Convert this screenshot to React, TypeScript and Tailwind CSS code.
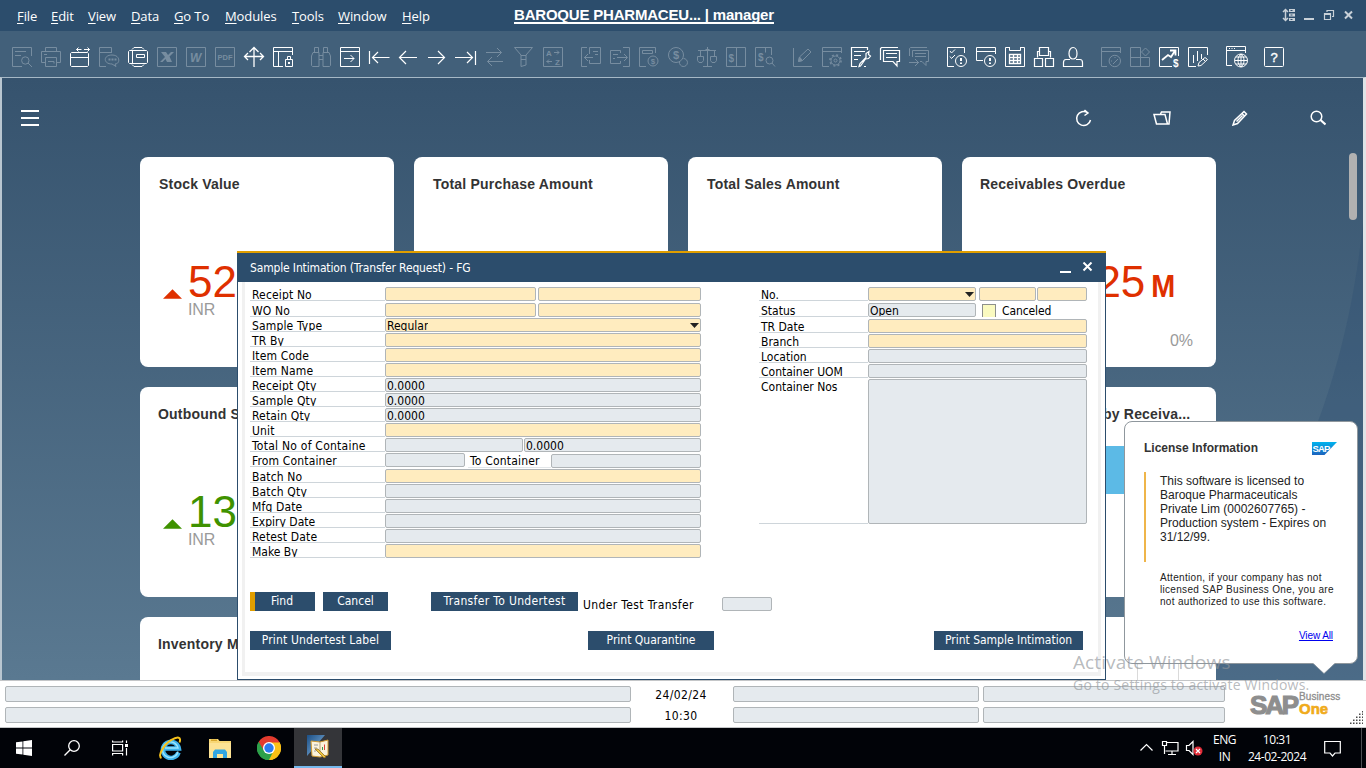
import type { ReactNode } from "react";

const SEGOE = "font-['Open_Sans','Noto_Sans',sans-serif]";
const TAHOMA = "font-['DejaVu_Sans_Condensed','DejaVu_Sans',sans-serif]";
const ARIAL = "font-['Liberation_Sans',Arial,sans-serif]";

const menus = [
  { label: "File", width: "w-[34px]" },
  { label: "Edit", width: "w-[37px]" },
  { label: "View", width: "w-[43px]" },
  { label: "Data", width: "w-[43px]" },
  { label: "Go To", width: "w-[51px]" },
  { label: "Modules", width: "w-[67px]" },
  { label: "Tools", width: "w-[46px]" },
  { label: "Window", width: "w-[64px]" },
  { label: "Help", width: "w-[40px]" },
];

function MenuBar() {
  return (
    <div className="flex h-[31px] shrink-0 bg-[#2c4d6c] text-white">
      <div className={`flex w-[497px] items-center pl-[17px] pt-[2px] text-[13px] tracking-[-0.1px] ${SEGOE}`}>
        {menus.map((m) => (
          <span key={m.label} className={`${m.width} whitespace-nowrap`}>
            <span className="underline underline-offset-2">{m.label[0]}</span>
            {m.label.slice(1)}
          </span>
        ))}
      </div>
      <div className="flex flex-1 items-start pl-[17px] pt-[7px]">
        <span className={`border-b-2 border-white text-[15px] font-bold leading-[15px] tracking-[-0.2px] ${ARIAL}`}>
          BAROQUE PHARMACEU... | manager
        </span>
      </div>
      <svg className="mr-[12px] mt-[8px] h-[14px] w-[72px]" viewBox="0 0 72 14" fill="none" stroke="#c9d1d8" strokeWidth="1.5">
        <path d="M3.500 1.500v11M1 4l2.500-2.500L6 4M1 10l2.500 2.500L6 10" />
        <path d="M7 2.500h6M7 7h6M7 11.500h6" strokeWidth="3" />
        <path d="M8.500 2.500h2M8.500 7h2M8.500 11.500h2" stroke="#2c4d6c" strokeWidth="1" />
        <path d="M22 11h10" strokeWidth="2" />
        <path d="M42.500 5.500h6v6h-6zM42 6.500h7M45 4V2.500h6.500v6H50" strokeWidth="1.200" />
        <path d="M63 3.500l7 7M70 3.500l-7 7" strokeWidth="2" />
      </svg>
    </div>
  );
}

type Glyph = { on?: boolean; draw: ReactNode };

const toolbar: Glyph[][] = [
  [
    { draw: <path d="M19.500 9V.500H.500V19.500H10M3 4.500h11M3 8.500h6M17 13.500a3.700 3.700 0 1 1-7.400 0a3.700 3.700 0 0 1 7.400 0M16 16l4 4" /> },
    { draw: <path d="M4.500 4.500V.500h11v4M4 15.500H.500V4.500h19v11H16M3 7.500h3M4.500 19.500v-9h11v9zM7 14.500h6v2" /> },
    { on: true, draw: <path d="M6.500 2.500h5M8.500.500l-2 2 2 2M14 2.500h5.500M17.500.500l2 2-2 2M1.500 5.500h16l1 1v12l-1 1h-16l-1-1v-12zM.500 10.500h18" /> },
    { draw: <><path d="M12.500 6V.500H.500V19.500H7M.500 5.500h12" /><path d="M13 8c8.500 0 8.500 9 3 9l1 2.500-4-2.500c-9 0-9-9 0-9z" /><path d="M9.500 12.500h2M12.500 12.500h2M15.500 12.500h2" strokeWidth="2" /></> },
    { on: true, draw: <path d="M4 2.500L6 .500h8l2 2M1.500 3.500h17l1 1v11l-1 1h-17l-1-1v-11zM4.500 3.500v13M8.500 7.500h8v3h-8zM4 17.500l2 2h8l2-2" /> },
    { draw: <><path d="M.500.500h19v19H.500z" /><path d="M4 5h5l2 3 3-3h3l-4.500 4.500L15 15h-5l-1.500-3-3 3H3l5-5z" className="fill-current" stroke="none" /></> },
    { draw: <><path d="M.500.500h19v19H.500z" /><text x="4" y="14.500" fontSize="12" fontWeight="700" fontStyle="italic" className="fill-current" stroke="none">W</text></> },
    { draw: <><path d="M.500.500h19v19H.500z" /><text x="2.500" y="12.500" fontSize="7.500" fontWeight="700" className="fill-current" stroke="none">PDF</text></> },
    { on: true, draw: <path d="M10 1v19M.500 9.500h19M5.500 5L10 .500 14.500 5M4 6L.500 9.500 4 13M16 6l3.500 3.500L16 13" strokeWidth="1.300" /> },
    { on: true, draw: <><path d="M19.500 8V.500H.500V19.500H10M.500 4.500h19M5.500 4.500v15M12.500 12.500h7v7h-7zM14.500 12.500v-3h3v3" /><path d="M15 15h2v2h-2z" className="fill-current" stroke="none" /></> },
  ],
  [
    { draw: <path d="M3.500 5V.500h4V5M12.500 5V.500h4V5M2 5.500h6v14H1.500l-1-1V9zM18 5.500h-6v14h6.500l1-1V9zM8 8.500h4M8 12.500h4" /> },
    { on: true, draw: <path d="M.500.500h19v19H.500zM.500 4.500h19M4 11.500h10M10.500 8l3.500 3.500-3.500 3.500" /> },
    { on: true, draw: <path d="M.500 4v13M3 10.500h17.500M9 5l-5.500 5.500L9 16" strokeWidth="1.200" /> },
    { on: true, draw: <path d="M1.500 10.500H19M8 4l-6.500 6.500L8 17" strokeWidth="1.200" /> },
    { on: true, draw: <path d="M1 10.500h16.500M11 4l6.500 6.500L11 17" strokeWidth="1.200" /> },
    { on: true, draw: <path d="M-1 10.500h17.500M11 5l5.500 5.500L11 16M19.500 4v14" strokeWidth="1.200" /> },
    { draw: <path d="M1 5.500h15.500M12 1l4.500 4.500L12 10M18 14.500H2.500M7 10l-4.500 4.500L7 19" /> },
    { draw: <path d="M.500.500h18L12 8v10l-5 1.500V8zM7 8.500h5M7 12.500h5" /> },
    { draw: <><path d="M.500.500h19v19H.500zM11 5.500h5M14 3.500l2 2-2 2M9 14.500H3.500M6 12.500l-2 2 2 2" /><text x="3" y="9" fontSize="8" fontWeight="700" className="fill-current" stroke="none">A</text><text x="12" y="17.500" fontSize="8" fontWeight="700" className="fill-current" stroke="none">Z</text></> },
  ],
  [
    { draw: <path d="M6 .500H.500v19H6M8.500 7V.500h11v16h-11V13M3 10.500h9M7 7l-3.500 3.500L7 14M12 4.500h5M14 7.500h3" /> },
    { draw: <path d="M10.500 6V3.500H.500v13h10V14M13 .500h6.500v19H13M7 10.500h10M14 7l3.500 3.500L14 14M3 7.500h5M3 11.500h2" /> },
    { draw: <><path d="M16.500 6V.500H.500V19.500H7M3.500 3.500h10v3h-10zM19 14a5 5 0 1 1-10 0a5 5 0 0 1 10 0" /><text x="11.700" y="17" fontSize="8" fontWeight="700" className="fill-current" stroke="none">$</text></> },
    { draw: <><circle cx="8" cy="8" r="7.500" /><path d="M15.500 11.500a4 4 0 1 1-4 3.500" /><text x="5" y="12" fontSize="11" fontWeight="700" className="fill-current" stroke="none">$</text></> },
    { draw: <path d="M10.500 2v17M6 19.500h9M1 3.500h18M10.500 0v3M3.500 4v5M17.500 4v5M.500 9.500h6v4l-1.500 2h-3l-1.500-2zM13.500 9.500h6v4l-1.500 2h-3l-1.500-2zM8.500 2.500h4" /> },
    { draw: <><path d="M.500.500h19v19H.500zM10.500.500v19" /><text x="2.500" y="14.500" fontSize="10" fontWeight="700" className="fill-current" stroke="none">$</text></> },
    { draw: <><path d="M9 19.500H.500V.500h16V8M10.500.500v5M18 13.500a3.500 3.500 0 1 1-7 0a3.500 3.500 0 0 1 7 0M17 16l3 3.500" /><text x="3" y="14" fontSize="10" fontWeight="700" className="fill-current" stroke="none">$</text></> },
  ],
  [
    { draw: <><path d="M.500 1v18.500H19M5.500 14.500l1-4.500 8.500-8 3 3-8.500 8.500z" /><path d="M5.500 14.500l1-4.500 3 3.500z" className="fill-current" /></> },
    { draw: <><path d="M19.500 6V.500H.500V19.500H7M.500 4.500h19" /><circle cx="13.500" cy="13.500" r="4.500" /><circle cx="13.500" cy="13.500" r="1.500" /><circle cx="13.500" cy="13.500" r="5.600" strokeDasharray="2 2.400" strokeWidth="1.500" /></> },
    { on: true, draw: <path d="M16.500 3V.500H.500V19.500H6M3 4.500h11M3 8.500h7M3 12.500h4M8 19.500l1-3 6-6V6.500l3-2-.500 3 2 1.500-2 2.500-3 .500-5 7zM13 19.500h2" strokeWidth="1.200" /> },
    { on: true, draw: <path d="M.500 13V1.500l1-1H18M3.500 3.500h16v11H17v4.500l-4-4.500H3.500zM6 6.500h11M6 10.500h11" strokeWidth="1.200" /> },
    { draw: <path d="M.500 9V1.500l1-1H18M3.500 10V3.500h16v11H17v4l-4-4h-2M6 6.500h11M6 9.500h11M0 15.500h10M6 12l3.500 3.500L6 19" /> },
  ],
  [
    { on: true, draw: <><path d="M17.500 6V.500H.500V19.500H7M3 4l1.500 2L8 2.500M3 9.500l1.500 2L8 8" /><circle cx="14" cy="14" r="5.500" /><path d="M14 11v3M14 15.500v1.500" strokeWidth="2" /></> },
    { on: true, draw: <><path d="M19.500 7V.500H.500V13.500H7M.500 4.500h19" /><circle cx="14" cy="14" r="5.500" /><path d="M14 11v3M14 15.500v1.500" strokeWidth="2" /></> },
    { on: true, draw: <><path d="M4 .500H.500v19h19V.500H16M4.500 0v3.500h11V0" /><path d="M4.500 7.500h11v9h-11zM4.500 10.500h11M4.500 13.500h11M8.500 7v9M12.500 7v9" strokeWidth="1.300" /></> },
    { on: true, draw: <path d="M5.500.500h9v8h-9zM.500 11.500h8v8h-8zM11.500 11.500h8v8h-8zM5 4.500H3.500v6M15 4.500h1.500v6" strokeWidth="1.200" /> },
    { on: true, draw: <path d="M14 6.500c0 3-1.500 5.500-4 5.500s-4-2.500-4-5.500S7.500.500 10 .500s4 3 4 6zM7 12.500H3c-2 0-2.500 2-2.500 3v4h19v-4c0-1-.500-3-2.500-3h-4" strokeWidth="1.200" /> },
  ],
  [
    { draw: <path d="M19.500 6V.500H.500V19.500H6M.500 4.500h19M19.500 14a5.700 5.700 0 1 1-11.400 0a5.700 5.700 0 0 1 11.400 0M12 17l5-5M10 14h1M14 10v1" /> },
    { draw: <path d="M.500.500h10v19H.500zM.500 10.500h19v9H10M19.500 5l-4 4-4-4 4-4z" /> },
    { on: true, draw: <><path d="M19.500 9V.500H.500V19.500H13" /><path d="M3 13l6-5 3 2 3.500-5.500M11 3.500h5.500v5" strokeWidth="1.800" /><text x="14" y="19.500" fontSize="10" fontWeight="700" className="fill-current" stroke="none">$</text></> },
    { on: true, draw: <path d="M19.500 8V.500H.500V19.500H8M5.500 8v8M9.500 4v10M13.500 7v5M10 19l1-3.500 6-5 2.500 2-6.500 6zM15 12l2 2" /> },
  ],
  [
    { on: true, draw: <><path d="M19.500 6V-.500H.500V18.500H6M.500 3.500h19M3 1.500h1M5.500 1.500h1M8 1.500h1" /><circle cx="15" cy="13.500" r="6.500" /><path d="M8.500 13.500h13M15 7v13M10 10h10M10 17h10M15 7c-4 3-4 10 0 13M15 7c4 3 4 10 0 13" /></> },
  ],
  [
    { on: true, draw: <><rect x=".5" y=".5" width="19" height="19" rx="1" /><text x="6.500" y="14.500" fontSize="13" className="fill-current" strokeWidth=".4">?</text></> },
  ],
];

function Toolbar() {
  return (
    <div className={`flex h-[46px] shrink-0 gap-[18px] bg-[#42607a] pl-[12px] pt-[16px] ${ARIAL}`}>
      {toolbar.map((group, g) => (
        <div key={g} className="flex gap-[9px]">
          {group.map((icon, i) => (
            <svg
              key={i}
              viewBox="0 0 20 20"
              className={`h-5 w-5 overflow-visible ${icon.on ? "text-white" : "text-[#778da0]"}`}
              fill="none"
              stroke="currentColor"
              strokeWidth="1"
            >
              {icon.draw}
            </svg>
          ))}
        </div>
      ))}
    </div>
  );
}

function Tile({ title, pad = "pl-[19px]", children }: { title: string; pad?: string; children?: ReactNode }) {
  return (
    <div className={`h-[210px] rounded-[8px] bg-white pt-[19px] ${pad}`}>
      <div className="text-[14px] font-bold leading-4 tracking-[0.2px] text-[#333]">{title}</div>
      {children}
    </div>
  );
}

function Kpi({ value, tone, fill }: { value: string; tone: string; fill: string }) {
  return (
    <div className={`ml-[4px] mt-[69px] ${tone}`}>
      <div className="flex h-[42px] items-center">
        <svg viewBox="0 0 20 10" className="mt-[24px] h-[10px] w-[19px]">
          <path d="M0 10L10 0l10 10z" className={fill} />
        </svg>
        <span className="ml-[6px] text-[44px] leading-[42px]">{value}</span>
      </div>
      <div className="ml-[25px] mt-[-2px] text-[16px] leading-[18px] tracking-[-0.1px] text-[#9a9a9a]">INR</div>
    </div>
  );
}

function Cockpit() {
  return (
    <div className={`relative h-full overflow-hidden bg-linear-to-b from-[#36536e] to-[#5a7991] ${ARIAL}`}>
      <svg className="absolute right-0 top-0 h-full w-[200px]" viewBox="0 0 200 602" preserveAspectRatio="none">
        <path d="M200 145C190 240 167 330 122 420C80 500 60 540 30 602H200z" fill="#2c4c70" fillOpacity=".3" />
      </svg>
      <div className="relative flex h-[79px] items-start justify-between pl-[19px] pr-[37px] pt-[32px]">
        <svg viewBox="0 0 18 16" className="h-4 w-[18px]" stroke="#fff" strokeWidth="2">
          <path d="M0 1h18M0 8h18M0 15h18" />
        </svg>
        <div className="flex gap-[62px]">
          <svg viewBox="0 0 16 16" className="ml-[1px] h-4 w-4 overflow-visible" fill="none" stroke="#fff" strokeWidth="1.500">
            <path d="M12.500 2.700A7 7 0 1 0 15.500 10M9.500 0l3.500 3-3.500 2.500" />
          </svg>
          <svg viewBox="0 0 17 16" className="h-4 w-[17px] overflow-visible" fill="none" stroke="#fff" strokeWidth="1.500">
            <path d="M1 4.500l2.500 9.500h11L12 4.500zM7.500 4l1-2h8.500L16 14h-1.500" />
          </svg>
          <svg viewBox="0 0 16 16" className="h-4 w-4" fill="none" stroke="#fff" strokeWidth="1.500">
            <path d="M1 15l1.500-4.500L12 1.500 14.500 4l-9 9.500zM10 3.500l2.500 2.500M4.500 11.500l6-6" />
          </svg>
          <svg viewBox="0 0 16 16" className="h-4 w-4" fill="none" stroke="#fff" strokeWidth="1.500">
            <circle cx="6.500" cy="6.500" r="5.300" />
            <path d="M10.500 10l5 4.500" strokeWidth="2.200" />
          </svg>
        </div>
      </div>
      <div className="relative ml-[138px] grid w-[1076px] grid-cols-[254px_254px_254px_254px] gap-[20px]">
        <Tile title="Stock Value"><Kpi value="52" tone="text-[#df3000]" fill="fill-[#df3000]" /></Tile>
        <Tile title="Total Purchase Amount" />
        <Tile title="Total Sales Amount" />
        <Tile title="Receivables Overdue" pad="pl-[18px]">
          <div className="mr-[39px] mt-[66px] flex items-baseline justify-end text-[#df3000]">
            <span className="text-[44px] leading-[48px]">25</span>
            <span className="ml-[5px] origin-bottom scale-x-90 text-[32px] font-bold leading-[40px]">M</span>
          </div>
          <div className="mr-[23px] mt-[25px] text-right text-[16px] leading-[20px] text-[#9a9a9a]">0%</div>
        </Tile>
        <Tile title="Outbound S" pad="pl-[18px]"><Kpi value="13" tone="pl-[1px] text-[#3f9200]" fill="fill-[#3f9200]" /></Tile>
        <Tile title="" />
        <Tile title="" />
        <Tile title="by Receiva..." pad="pl-[141px]">
          <div className="mt-[24px] h-[48px] w-[60px] bg-[#5cbae6]" />
        </Tile>
        <Tile title="Inventory M" pad="pl-[18px]" />
        <Tile title="" />
        <Tile title="" />
        <Tile title="" pad="pl-[175px]">
          <div className="mt-[11px] h-[40px] w-[42px] border-x border-[#dadada]" />
        </Tile>
      </div>
      <div className="absolute right-[6px] top-[75px] h-[67px] w-[8px] rounded-full bg-[#b1b1b1]" />
    </div>
  );
}

function Box({ w, value, tone = "y", arrow }: { w: string; value?: string; tone?: "y" | "g"; arrow?: boolean }) {
  return (
    <div
      className={`flex h-[14px] shrink-0 items-start justify-between rounded-[2px] border border-[#b0b5b8] pl-[1px] ${w} ${tone === "y" ? "bg-[#ffecbf]" : "bg-[#e5eaee]"}`}
    >
      <span className="h-[12px] overflow-hidden leading-[15px]">{value}</span>
      {arrow && (
        <svg viewBox="0 0 9 5" className="mr-[1px] mt-[4px] h-[5px] w-[9px]">
          <path d="M0 0h9L4.500 5z" fill="#222" />
        </svg>
      )}
    </div>
  );
}

function Row({ label, lw, gap = "mt-[1px]", children }: { label: string; lw: string; gap?: string; children: ReactNode }) {
  return (
    <div className={`flex h-[14px] ${gap}`}>
      <div className={`h-[14px] shrink-0 overflow-hidden whitespace-nowrap border-b border-[#ced5da] pl-[2px] leading-[17px] ${lw}`}>
        {label}
      </div>
      {children}
    </div>
  );
}

function Button({ label, w, first }: { label: string; w: string; first?: boolean }) {
  return (
    <div
      className={`h-[19px] bg-[#2c4d6c] text-center leading-[18px] text-white ${w} ${first ? "border-l-[5px] border-[#e09e00] pr-[6px]" : ""}`}
    >
      {label}
    </div>
  );
}

function FormWindow() {
  const L = "w-[135px] tracking-[0.15px]";
  const R = "w-[109px]";
  const full = "w-[316px]";
  return (
    <div className={`absolute left-[235px] top-[173px] flex h-[429px] w-[869px] flex-col border-x border-b border-[#2c4d6c] bg-white text-[12px] text-black ${TAHOMA}`}>
      <div className="mx-[-1px] flex h-[31px] shrink-0 items-center justify-between border-t-2 border-[#e09e00] bg-[#2c4d6c] pl-[13px] pr-[13px] text-[12px] tracking-[-0.15px] text-white">
        <span className="pt-[1px]">Sample Intimation (Transfer Request) - FG</span>
        <svg viewBox="0 0 33 12" className="h-[12px] w-[33px]" stroke="#fff" strokeWidth="2">
          <path d="M0 10h11M23.500 .500l8 8M31.500 .500l-8 8" />
        </svg>
      </div>
      <div className="mb-[3px] ml-[4px] mr-[4px] flex-1 border-x-[3px] border-b-4 border-[#f1f1f1] pl-[5px]">
        <div className="flex h-[310px] items-start pt-[5px]">
          <div className="w-[451px]">
            <Row label="Receipt No" lw={L} gap="mt-0"><Box w="w-[151px] mr-[2px]" /><Box w="w-[163px]" /></Row>
            <Row label="WO No" lw={L} gap="mt-[2px]"><Box w="w-[151px] mr-[2px]" /><Box w="w-[163px]" /></Row>
            <Row label="Sample Type" lw={L}><Box w={full} value="Regular" arrow /></Row>
            <Row label="TR By" lw={L}><Box w={full} /></Row>
            <Row label="Item Code" lw={L}><Box w={full} /></Row>
            <Row label="Item Name" lw={L}><Box w={full} /></Row>
            <Row label="Receipt Qty" lw={L}><Box w={full} tone="g" value="0.0000" /></Row>
            <Row label="Sample Qty" lw={L}><Box w={full} tone="g" value="0.0000" /></Row>
            <Row label="Retain Qty" lw={L}><Box w={full} tone="g" value="0.0000" /></Row>
            <Row label="Unit" lw={L}><Box w={full} /></Row>
            <Row label="Total No of Containe" lw="w-[135px] tracking-[0.25px]"><Box w="w-[138px] mr-[1px]" tone="g" /><Box w="w-[177px]" tone="g" value="0.0000" /></Row>
            <Row label="From Container" lw={L}>
              <Box w="w-[80px] mr-[3px]" tone="g" />
              <div className="h-[15px] w-[83px] border-b border-[#e2e6e9] pl-[2px] leading-[17px] tracking-[0.2px]">To Container</div>
              <Box w="w-[150px] mt-[1px]" tone="g" />
            </Row>
            <Row label="Batch No" lw={L} gap="mt-[2px]"><Box w={full} /></Row>
            <Row label="Batch Qty" lw={L}><Box w={full} tone="g" /></Row>
            <Row label="Mfg Date" lw={L}><Box w={full} tone="g" /></Row>
            <Row label="Expiry Date" lw="w-[135px]"><Box w={full} tone="g" /></Row>
            <Row label="Retest Date" lw={L}><Box w={full} tone="g" /></Row>
            <Row label="Make By" lw="w-[135px]"><Box w={full} /></Row>
          </div>
          <div className="ml-[58px] w-[328px]">
            <Row label="No." lw={R} gap="mt-0"><Box w="w-[108px] mr-[3px]" arrow /><Box w="w-[57px] mr-[1px]" /><Box w="w-[50px]" /></Row>
            <Row label="Status" lw={R} gap="mt-[2px]">
              <Box w="w-[108px]" tone="g" value="Open" />
              <div className="ml-[6px] mt-[1px] h-[13px] w-[14px] border border-b-0 border-[#8d908c] bg-[#fafac0]" />
              <span className="ml-[6px] leading-[17px] tracking-[-0.1px]">Canceled</span>
            </Row>
            <Row label="TR Date" lw={R} gap="mt-[2px]"><Box w="w-[219px]" /></Row>
            <Row label="Branch" lw={R}><Box w="w-[219px]" /></Row>
            <Row label="Location" lw={R}><Box w="w-[219px]" tone="g" /></Row>
            <Row label="Container UOM" lw={R}><Box w="w-[219px]" tone="g" /></Row>
            <div className="mt-[1px] flex h-[145px]">
              <div className="w-[109px] border-b border-[#ced5da] pl-[2px] leading-[17px]">Container Nos</div>
              <div className="w-[219px] rounded-[2px] border border-[#b0b5b8] bg-[#e5eaee]" />
            </div>
          </div>
        </div>
        <div className="flex">
          <Button label="Find" w="w-[65px]" first />
          <Button label="Cancel" w="ml-[8px] w-[65px]" />
          <Button label="Transfer To Undertest" w="ml-[43px] w-[147px] tracking-[0.35px]" />
          <span className="ml-[5px] w-[139px] pt-[5px] leading-[17px] tracking-[0.37px]">Under Test Transfer</span>
          <Box w="w-[50px] mt-[5px]" tone="g" />
        </div>
        <div className="mt-[17px] flex">
          <Button label="Print Undertest Label" w="w-[141px] tracking-[0.15px]" />
          <Button label="Print Quarantine" w="ml-[197px] w-[126px]" />
          <Button label="Print Sample Intimation" w="ml-[220px] w-[149px]" />
        </div>
      </div>
    </div>
  );
}

function LicensePopup() {
  return (
    <div className={`absolute left-[1122px] top-[343px] h-[243px] w-[234px] rounded-[8px] border border-[#8f979d] bg-white text-[#222] ${ARIAL}`}>
      <div className="flex items-center justify-between pl-[19px] pr-[20px] pt-[18px]">
        <span className="text-[12px] font-bold leading-4 text-[#333]">License Information</span>
        <svg viewBox="0 0 25 13" className="h-[13px] w-[25px] overflow-visible">
          <defs>
            <linearGradient id="sap" x1="0" y1="0" x2="0" y2="1">
              <stop offset="0" stopColor="#00b3ee" />
              <stop offset="1" stopColor="#1b62bd" />
            </linearGradient>
          </defs>
          <path d="M0 0h25L12.500 13H0z" fill="url(#sap)" />
          <text x="0.500" y="10" fontSize="9.500" fontWeight="700" letterSpacing="-.8" fill="#fff">SAP</text>
        </svg>
      </div>
      <div className="ml-[19px] mt-[16px] h-[90px] w-[205px] border-l-2 border-[#efb54a] pl-[14px] pt-[2px] text-[12px] leading-[14px]">
        This software is licensed to
        <br />
        Baroque Pharmaceuticals
        <br />
        Private Lim (0002607765) -
        <br />
        Production system - Expires on
        <br />
        31/12/99.
      </div>
      <div className="ml-[35px] mt-[10px] whitespace-nowrap text-[10px] leading-[12px] tracking-[0.31px]">
        Attention, if your company has not
        <br />
        licensed SAP Business One, you are
        <br />
        not authorized to use this software.
      </div>
      <div className="mr-[24px] mt-[22px] text-right text-[10px] leading-[12px] tracking-[-0.1px] text-[#0000ee] underline">View All</div>
      <svg className="absolute left-[188px] top-[240px] h-[12px] w-[22px]" viewBox="0 0 22 12">
        <path d="M0 0h22v1L11 11.500 0 1z" fill="#fff" />
        <path d="M0 1.500L11 11.500 22 1.500" fill="none" stroke="#8f979d" strokeWidth=".6" />
      </svg>
    </div>
  );
}

function StatusField({ w }: { w: string }) {
  return <div className={`h-[16px] rounded-[2px] border border-[#b0b5b8] bg-[#e5eaee] ${w}`} />;
}

function StatusBar() {
  return (
    <div className={`relative flex h-[48px] shrink-0 border-b border-t border-[#c4c6c8] bg-white pl-[5px] pt-[5px] text-[12px] text-black ${TAHOMA}`}>
      <div>
        {["24/02/24", "10:30"].map((text) => (
          <div key={text} className="mb-[5px] flex h-[16px]">
            <StatusField w="w-[626px]" />
            <span className="w-[102px] pr-[2px] text-center leading-[18px] tracking-[0.35px]">{text}</span>
            <StatusField w="w-[246px]" />
            <StatusField w="ml-[4px] w-[242px]" />
          </div>
        ))}
      </div>
      <div className={`ml-[25px] mt-[3px] flex ${ARIAL}`}>
        <span className="w-[49px] text-[26px] font-bold leading-[32px] tracking-[-2.2px] text-[#8e8e8e] [-webkit-text-stroke:1.2px_#8e8e8e]">SAP</span>
        <div className="mt-[2px]">
          <div className="text-[10px] leading-[12px] tracking-[0.1px] text-[#8e8e8e] [-webkit-text-stroke:0.3px_#8e8e8e]">Business</div>
          <div className="text-[15px] font-bold leading-[12px] text-[#f0ab1c] [-webkit-text-stroke:0.6px_#f0ab1c]">One</div>
        </div>
      </div>
      <svg className="absolute right-[3px] top-[30px] h-[13px] w-[13px]" viewBox="0 0 13 13" stroke="#4a4a4a" strokeWidth="1.500" strokeDasharray="1.500 1.500">
        <path d="M0 12.250h13M3 9.250h10M6 6.250h7M9 3.250h4M12 .750h1" />
      </svg>
    </div>
  );
}

function Taskbar() {
  return (
    <div className={`flex h-[40px] shrink-0 items-center bg-[#010308] text-white ${SEGOE}`}>
      <div className="flex w-[48px] justify-center">
        <svg viewBox="0 0 16 16" className="h-4 w-4" fill="#fff">
          <path d="M0 2.300L6.500 1.400v6.200H0zM7.300 1.300L16 0v7.600H7.300zM0 8.400h6.500v6.200L0 13.700zM7.300 8.400H16V16l-8.700-1.300z" />
        </svg>
      </div>
      <div className="flex w-[48px] justify-center">
        <svg viewBox="0 0 16 16" className="h-4 w-4" fill="none" stroke="#fff" strokeWidth="1.300">
          <circle cx="10" cy="6" r="5.300" />
          <path d="M6.200 9.800L.500 15.500" />
        </svg>
      </div>
      <div className="flex w-[48px] justify-center">
        <svg viewBox="0 0 16 16" className="h-4 w-4" fill="none" stroke="#fff" strokeWidth="1.200">
          <path d="M.600 4.500h10v6.500h-10zM.600 2.500V.500M10.600 2.500V.500M.600 2h10M.600 13v2.500M10.600 13v2.500M.600 13.500h10M14.500.500V3M14.500 8v7.500" />
          <path d="M13 4h3v3h-3z" fill="#fff" stroke="none" />
        </svg>
      </div>
      <div className="flex w-[52px] justify-center">
        <svg viewBox="0 0 24 24" className="h-6 w-6" fill="none">
          <path d="M20.500 16.500A8 8 0 1 1 20.800 12.500H7" stroke="#3fb4ec" strokeWidth="4.600" />
          <path d="M20 15.500A7.800 7.800 0 1 1 20 12H7" stroke="#9be4fc" strokeWidth="1.400" />
          <path d="M3.500 22C-1 20 6 8.500 13 4.200s10.500-3.200 8.500 2.300" stroke="#f5c11a" strokeWidth="2" />
        </svg>
      </div>
      <div className="flex w-[49px] justify-center pr-[2px]">
        <svg viewBox="0 0 22 19" className="h-[19px] w-[22px]">
          <path d="M0 0h9l1.500 2H22v17H0z" fill="#f8d775" />
          <path d="M2 .500h6v1.500H2z" fill="#d9a92f" />
          <path d="M0 4h22v15H0z" fill="#fde394" />
          <path d="M4 19v-6l2-2.500h10l2 2.500v6h-4v-4H8v4z" fill="#32a5e0" />
        </svg>
      </div>
      <div className="flex w-[49px] justify-center pr-[2px]">
        <svg viewBox="0 0 24 24" className="h-6 w-6">
          <path d="M12 12L1.600 6A12 12 0 0 1 22.400 6z" fill="#e33b2e" />
          <path d="M12 12L22.400 6A12 12 0 0 1 12 24z" fill="#fbc116" />
          <path d="M12 12v12A12 12 0 0 1 1.600 6z" fill="#2da04a" />
          <path d="M12 6h10.400L17 15zM7 15L1.600 6 12 8z" fill="#e33b2e" />
          <path d="M12 6.500h10.600a12 12 0 0 1-10.600 17.500l5-9z" fill="#fbc116" />
          <path d="M1.600 6l5.300 9L12 17.500l3.500-.5L12 24A12 12 0 0 1 1.600 6z" fill="#2da04a" />
          <circle cx="12" cy="12" r="6" fill="#fff" />
          <circle cx="12" cy="12" r="4.700" fill="#2b7bf0" />
        </svg>
      </div>
      <div className="flex h-full w-[48px] items-center justify-center border-b-2 border-[#76b9ed] bg-[#343539]">
        <svg viewBox="0 0 22 24" className="h-6 w-[22px]">
          <defs>
            <linearGradient id="b1" x1="0" y1="0" x2="1" y2="1">
              <stop offset="0" stopColor="#1b4f86" />
              <stop offset="1" stopColor="#8cbce4" />
            </linearGradient>
          </defs>
          <path d="M0 0h18L0 21z" fill="url(#b1)" />
          <path d="M4 6l9 1 8-2v15l-8 2-8-1z" fill="#fbf3dc" stroke="#cf9a32" />
          <path d="M13 7v9" stroke="#bba679" />
          <path d="M7 10h4M7 13h3M7 16h2" stroke="#9a9a9a" />
          <path d="M15.500 15v-3" stroke="#3a9a4a" />
          <path d="M17.500 15V9.500" stroke="#d8443a" />
          <path d="M8 14l9 9 2-1-8-8z" fill="#f0c53d" stroke="#85621c" strokeWidth=".7" />
        </svg>
      </div>
      <div className="flex-1" />
      <svg viewBox="0 0 64 16" className="h-4 w-[64px]" fill="none" stroke="#fff" strokeWidth="1.200">
        <path d="M.500 10.500L6.500 4.500l6 6" />
        <path d="M26 2.500h12v8.500H25.500M32 11v3.500M28 14.500h8M22.500 1.500h4v4h-4zM24.500 5.500V14" />
        <path d="M46.500 5.500h2.500l4-4v13l-4-4h-2.500z" />
        <circle cx="58" cy="11" r="4.500" fill="#e12d39" stroke="none" />
        <path d="M56 9l4 4M60 9l-4 4" />
      </svg>
      <div className="w-[41px] text-center text-[12px] leading-[17px] tracking-[-0.4px]">ENG<br />IN</div>
      <div className="w-[64px] text-center text-[12px] leading-[17px] tracking-[-0.45px]">10:31<br />24-02-2024</div>
      <svg viewBox="0 0 17 17" className="ml-[15px] mr-[20px] h-[17px] w-[17px]" fill="none" stroke="#fff" strokeWidth="1.200">
        <path d="M.700 1.500h15.600v11.500H11l-2.500 3L6 13H.700z" />
      </svg>
      <div className="h-full w-[5px] border-l border-[#4c4e52]" />
    </div>
  );
}

export default function App() {
  return (
    <div className="relative flex h-[768px] w-[1366px] flex-col overflow-hidden">
      <MenuBar />
      <Toolbar />
      <div className="relative h-[603px] shrink-0 border-l-2 border-r-[3px] border-t border-l-[#b9c6d0] border-r-[#dfe3e6] border-t-[#a6b8c6]">
        <Cockpit />
        <FormWindow />
        <LicensePopup />
      </div>
      <StatusBar />
      <Taskbar />
      <div className={`absolute left-[1073px] top-[650px] whitespace-nowrap text-[#8f9499]/65 ${SEGOE}`}>
        <div className="text-[19px] leading-[24px] tracking-[0.1px]">Activate Windows</div>
        <div className="text-[14px] leading-[22px] tracking-[0.2px]">Go to Settings to activate Windows.</div>
      </div>
    </div>
  );
}
